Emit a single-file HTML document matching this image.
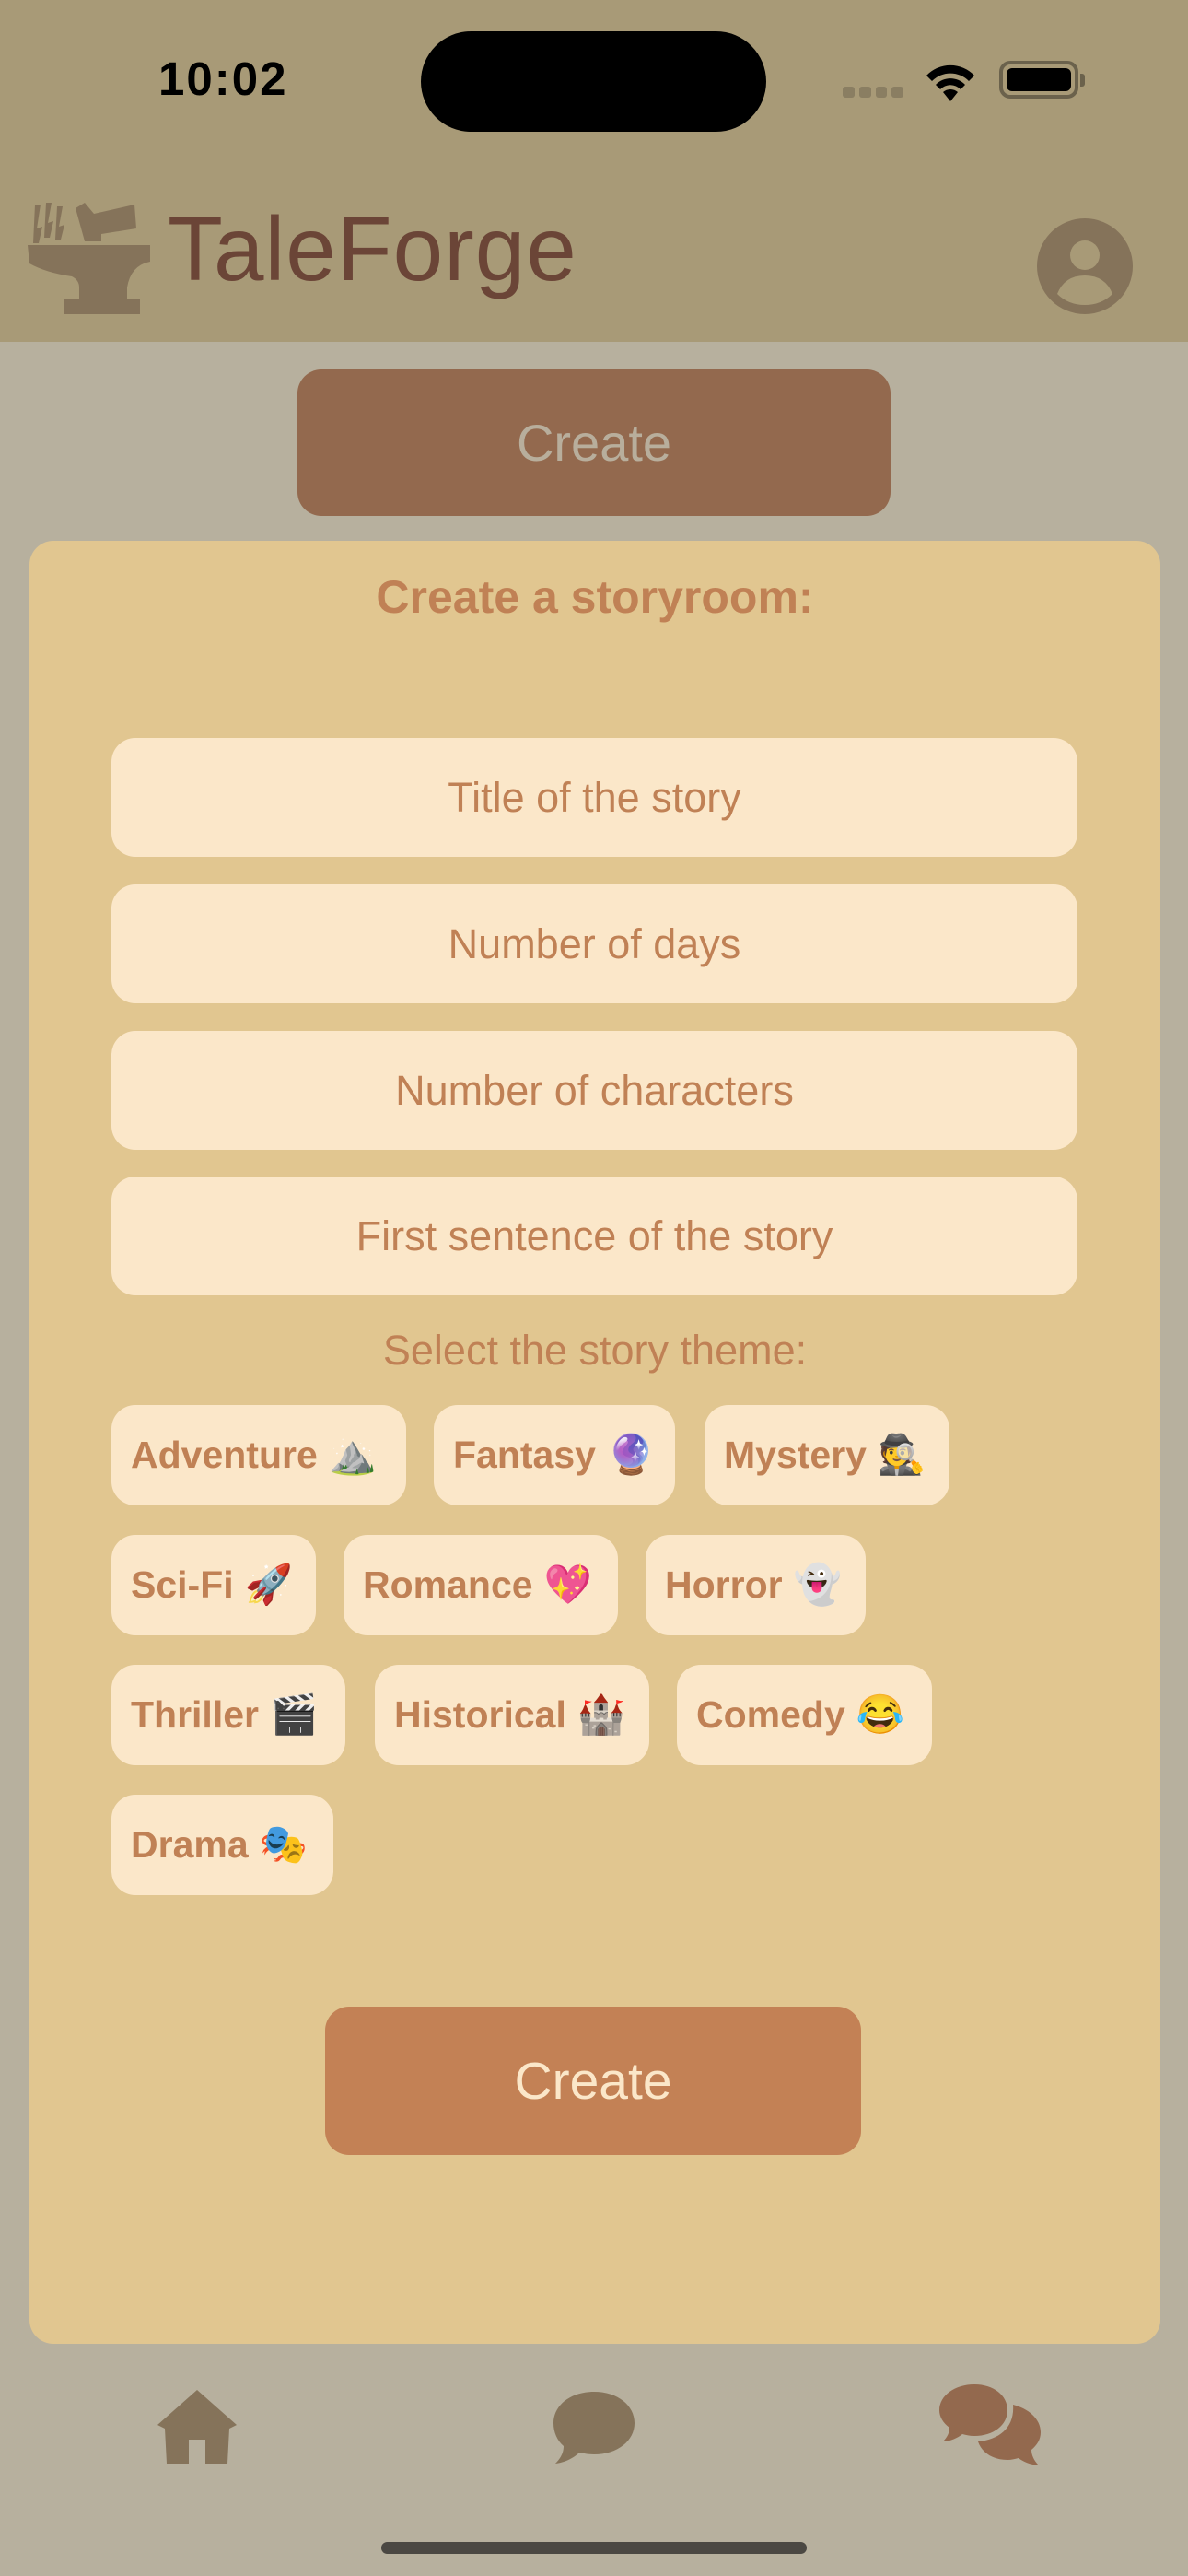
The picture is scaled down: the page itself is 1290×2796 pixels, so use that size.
<!DOCTYPE html>
<html><head><meta charset="utf-8"><style>
*{margin:0;padding:0;box-sizing:border-box}
body{width:1290px;height:2796px;background:#b7b09e;position:relative;overflow:hidden;font-family:"Liberation Sans",sans-serif}
.a{position:absolute}
.hdr{left:0;top:0;width:1290px;height:371px;background:#a89a77}
.inp{left:121px;width:1049px;height:129px;background:#fbe7c9;border-radius:26px;color:#c08155;font-size:45px;display:flex;align-items:center;justify-content:center}
.chip{height:109px;background:#fbe7c9;border-radius:26px;color:#c08155;font-size:41px;font-weight:bold;display:flex;align-items:center;padding-left:21px;white-space:nowrap}
.chip span{font-size:42px;margin-left:12px;font-weight:normal}
</style></head><body>
<div class="a hdr"></div>
<div class="a" style="left:172px;top:56px;font-size:51px;font-weight:bold;color:#000;letter-spacing:2px">10:02</div>
<div class="a" style="left:457px;top:34px;width:375px;height:109px;background:#000;border-radius:55px"></div>
<div class="a" style="left:915px;top:94px;width:66px;height:12px;display:flex;gap:5px"><i style="flex:1;background:#8a7e62;border-radius:3px"></i><i style="flex:1;background:#8a7e62;border-radius:3px"></i><i style="flex:1;background:#8a7e62;border-radius:3px"></i><i style="flex:1;background:#8a7e62;border-radius:3px"></i></div>
<svg class="a" style="left:1002px;top:62px" width="60" height="48" viewBox="0 0 60 48"><path d="M30 48 L22 38 A12 12 0 0 1 38 38 Z M14 30 A22 22 0 0 1 46 30 L41 35 A15 15 0 0 0 19 35 Z M4 20 A36 36 0 0 1 56 20 L50 26 A28 28 0 0 0 10 26 Z" fill="#000"/></svg>
<div class="a" style="left:1085px;top:66px;width:86px;height:41px;border:4px solid #6b624c;border-radius:12px;padding:4px"><div style="width:100%;height:100%;background:#000;border-radius:6px"></div></div>
<div class="a" style="left:1173px;top:80px;width:5px;height:14px;background:#6b624c;border-radius:0 3px 3px 0"></div>
<svg class="a" style="left:30px;top:212px" width="136" height="130" viewBox="0 0 136 130"><g fill="#85735a">
<path d="M52 14 L62 8 L72 20 L116 10 L118 36 L80 42 L80 50 L62 50 Z"/>
<path d="M8 10 L14 10 L10 36 L16 34 L12 52 L6 52 Z M20 8 L26 8 L22 30 L28 28 L24 46 L18 46 Z M32 12 L38 12 L34 34 L40 32 L36 48 L30 48 Z"/>
<path d="M0 54 L133 54 L133 72 Q112 76 108 100 L108 112 L122 112 L122 129 L40 129 L40 112 L56 112 L56 100 Q56 92 48 88 Q20 84 2 74 Z"/>
</g></svg>
<div class="a" style="left:182px;top:214px;font-size:98px;color:#6b4537;letter-spacing:1px">TaleForge</div>
<svg class="a" style="left:1126px;top:237px" width="104" height="104" viewBox="0 0 104 104"><circle cx="52" cy="52" r="52" fill="#85735a"/><circle cx="52" cy="40" r="16" fill="#a89a77"/><path d="M22 82 Q30 62 52 62 Q74 62 82 82 Q70 94 52 94 Q34 94 22 82Z" fill="#a89a77"/></svg>
<div class="a" style="left:323px;top:401px;width:644px;height:159px;background:#93694e;border-radius:26px;color:#b8ae9c;font-size:56px;display:flex;align-items:center;justify-content:center">Create</div>
<div class="a" style="left:32px;top:587px;width:1228px;height:1957px;background:#e1c690;border-radius:26px"></div>
<div class="a" style="left:32px;top:619px;width:1228px;text-align:center;color:#c08155;font-size:50px;font-weight:bold">Create a storyroom:</div>
<div class="a inp" style="top:801px">Title of the story</div>
<div class="a inp" style="top:960px">Number of days</div>
<div class="a inp" style="top:1119px">Number of characters</div>
<div class="a inp" style="top:1277px">First sentence of the story</div>
<div class="a" style="left:32px;top:1440px;width:1228px;text-align:center;color:#c08155;font-size:45px">Select the story theme:</div>
<div class="a chip" style="left:121px;top:1525px;width:320px">Adventure<span>⛰️</span></div>
<div class="a chip" style="left:471px;top:1525px;width:262px">Fantasy<span>🔮</span></div>
<div class="a chip" style="left:765px;top:1525px;width:266px">Mystery<span>🕵️</span></div>
<div class="a chip" style="left:121px;top:1666px;width:222px">Sci-Fi<span>🚀</span></div>
<div class="a chip" style="left:373px;top:1666px;width:298px">Romance<span>💖</span></div>
<div class="a chip" style="left:701px;top:1666px;width:239px">Horror<span>👻</span></div>
<div class="a chip" style="left:121px;top:1807px;width:254px">Thriller<span>🎬</span></div>
<div class="a chip" style="left:407px;top:1807px;width:298px">Historical<span>🏰</span></div>
<div class="a chip" style="left:735px;top:1807px;width:277px">Comedy<span>😂</span></div>
<div class="a chip" style="left:121px;top:1948px;width:241px">Drama<span>🎭</span></div>
<div class="a" style="left:353px;top:2178px;width:582px;height:161px;background:#c38155;border-radius:26px;color:#fbe7c9;font-size:57px;display:flex;align-items:center;justify-content:center">Create</div>
<svg class="a" style="left:171px;top:2594px" width="86" height="80" viewBox="0 0 86 80"><path d="M43 0 L86 38 L78 42 L76 80 L52 80 L52 54 L34 54 L34 80 L10 80 L8 42 L0 38 Z" fill="#85735a"/></svg>
<svg class="a" style="left:601px;top:2596px" width="88" height="78" viewBox="0 0 88 78"><path d="M44 0 C70 0 88 15 88 34 C88 53 70 68 44 68 C38 68 33 67 28 66 C22 72 12 77 2 78 C8 72 11 66 11 59 C4 53 0 44 0 34 C0 15 18 0 44 0Z" fill="#85735a"/></svg>
<svg class="a" style="left:1020px;top:2588px" width="110" height="92" viewBox="0 0 110 92"><path d="M38 0 C59 0 74 12 74 28 C74 44 59 56 38 56 C33 56 29 55 25 54 C20 58 12 62 4 62 C9 57 11 52 11 47 C4 42 0 35 0 28 C0 12 17 0 38 0Z" fill="#93694e"/><path d="M80 22 C96 26 110 37 110 52 C110 60 106 66 100 71 C100 76 102 82 108 88 C98 87 91 84 86 80 C82 81 78 82 74 82 C58 82 46 74 42 62 C66 60 82 46 80 22Z" fill="#93694e"/></svg>
<div class="a" style="left:414px;top:2759px;width:462px;height:13px;background:#4b4843;border-radius:7px"></div>
</body></html>
